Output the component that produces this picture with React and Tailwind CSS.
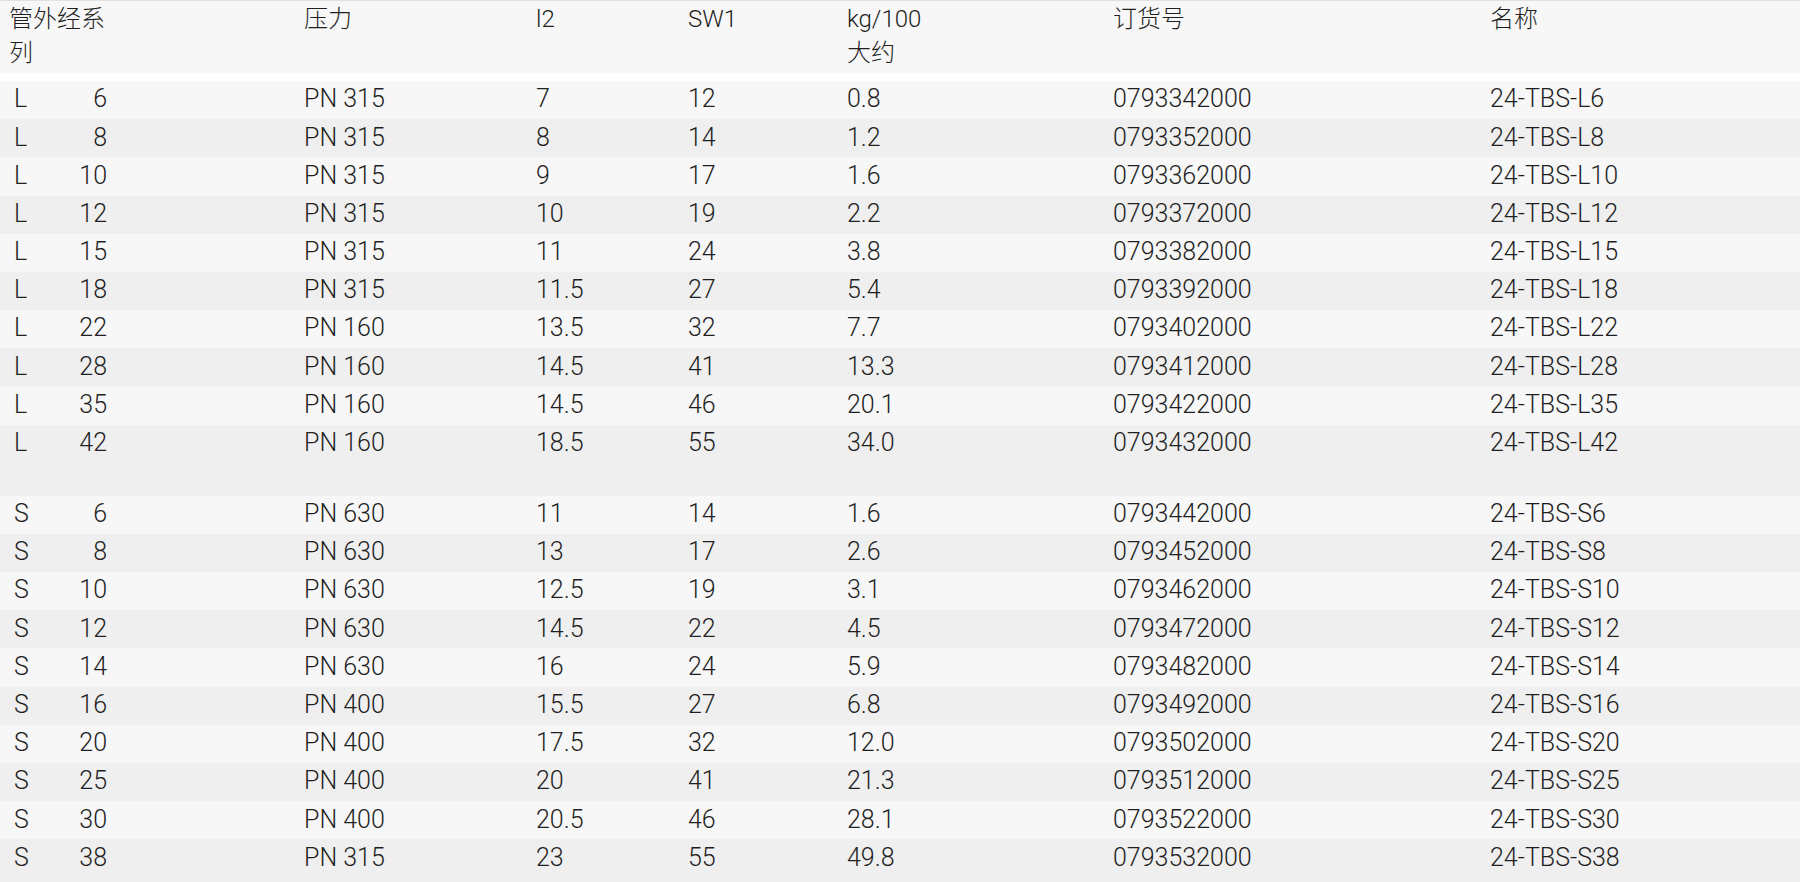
import React from "react";

// filas de la tabla: serie, diámetro, presión, l2, SW1, peso, número de pedido, nombre
const serieL = [
  ["L", "6", "PN 315", "7", "12", "0.8", "0793342000", "24-TBS-L6"],
  ["L", "8", "PN 315", "8", "14", "1.2", "0793352000", "24-TBS-L8"],
  ["L", "10", "PN 315", "9", "17", "1.6", "0793362000", "24-TBS-L10"],
  ["L", "12", "PN 315", "10", "19", "2.2", "0793372000", "24-TBS-L12"],
  ["L", "15", "PN 315", "11", "24", "3.8", "0793382000", "24-TBS-L15"],
  ["L", "18", "PN 315", "11.5", "27", "5.4", "0793392000", "24-TBS-L18"],
  ["L", "22", "PN 160", "13.5", "32", "7.7", "0793402000", "24-TBS-L22"],
  ["L", "28", "PN 160", "14.5", "41", "13.3", "0793412000", "24-TBS-L28"],
  ["L", "35", "PN 160", "14.5", "46", "20.1", "0793422000", "24-TBS-L35"],
  ["L", "42", "PN 160", "18.5", "55", "34.0", "0793432000", "24-TBS-L42"],
];

const serieS = [
  ["S", "6", "PN 630", "11", "14", "1.6", "0793442000", "24-TBS-S6"],
  ["S", "8", "PN 630", "13", "17", "2.6", "0793452000", "24-TBS-S8"],
  ["S", "10", "PN 630", "12.5", "19", "3.1", "0793462000", "24-TBS-S10"],
  ["S", "12", "PN 630", "14.5", "22", "4.5", "0793472000", "24-TBS-S12"],
  ["S", "14", "PN 630", "16", "24", "5.9", "0793482000", "24-TBS-S14"],
  ["S", "16", "PN 400", "15.5", "27", "6.8", "0793492000", "24-TBS-S16"],
  ["S", "20", "PN 400", "17.5", "32", "12.0", "0793502000", "24-TBS-S20"],
  ["S", "25", "PN 400", "20", "41", "21.3", "0793512000", "24-TBS-S25"],
  ["S", "30", "PN 400", "20.5", "46", "28.1", "0793522000", "24-TBS-S30"],
  ["S", "38", "PN 315", "23", "55", "49.8", "0793532000", "24-TBS-S38"],
];

const cols = "grid grid-cols-[304px_232px_152px_159px_266px_377px_1fr]";
const celda = "flex h-[38.2px] items-center pb-[2px]";

function Fila({ fila, oscura, extra, ultima }) {
  const [serie, d, pn, l2, sw, kg, ref, nombre] = fila;
  return (
    <div
      className={`${cols} items-start ${oscura ? "bg-[#efefef]" : "bg-[#f7f7f7]"} ${
        extra ? "h-[71px]" : ultima ? "h-[42px]" : "h-[38.2px]"
      }`}
    >
      <div className={celda}>
        <span className="w-[14px]" />
        <span className="w-[40px]">{serie}</span>
        <span className="w-[53px] text-right">{d}</span>
      </div>
      <div className={celda}>{pn}</div>
      <div className={celda}>{l2}</div>
      <div className={celda}>{sw}</div>
      <div className={celda}>{kg}</div>
      <div className={celda}>{ref}</div>
      <div className={celda}>{nombre}</div>
    </div>
  );
}

export default function App() {
  return (
    <div
      className="min-h-screen w-full bg-[#efefef] text-[25px] font-light text-[#1f1f1f]"
      style={{ fontFamily: 'Roboto, "Noto Sans CJK SC", sans-serif' }}
    >
      <div className={`${cols} h-[73px] border-t border-[#e2e2e2] bg-[#f7f7f7] pt-[1px] text-[24px] leading-[34px]`}>
        <div className="w-[118px] pl-[9px]">管外经系列</div>
        <div>压力</div>
        <div>l2</div>
        <div>SW1</div>
        <div>
          kg/100
          <br />
          大约
        </div>
        <div>订货号</div>
        <div>名称</div>
      </div>
      <div className="h-[8px] bg-white" />
      {serieL.map((f, i) => (
        <Fila key={f[7]} fila={f} oscura={i % 2 === 1} extra={i === serieL.length - 1} />
      ))}
      {serieS.map((f, i) => (
        <Fila key={f[7]} fila={f} oscura={i % 2 === 1} ultima={i === serieS.length - 1} />
      ))}
    </div>
  );
}
